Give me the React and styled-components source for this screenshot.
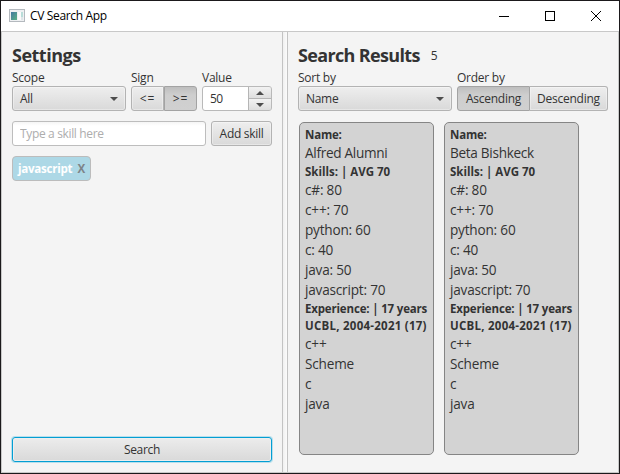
import React from "react";
import styled, { createGlobalStyle, css } from "styled-components";

const GlobalStyle = createGlobalStyle`
  * { box-sizing: border-box; }
  body { margin: 0; background: #1c1a1c; }
  button, input { font: inherit; color: inherit; letter-spacing: inherit; }
`;

const Window = styled.div`
  width: 620px;
  height: 474px;
  border: 1px solid #1b191b;
  background: #f4f4f4;
  color: #333;
  font: 12px/16px "Open Sans", "Noto Sans", sans-serif;
  letter-spacing: -0.3px;
  display: flex;
  flex-direction: column;
  white-space: nowrap;
  overflow: hidden;
`;
const TitleBar = styled.header`
  height: 30px;
  flex: none;
  background: #fff;
  color: #000;
  display: flex;
  align-items: center;
  padding-left: 8px;
`;
const WindowTitle = styled.span`
  flex: 1;
  margin-left: 5px;
  letter-spacing: -0.35px;
`;
const WindowButton = styled.span`
  width: 46px;
  height: 30px;
  display: grid;
  place-items: center;
`;
const Content = styled.main`
  flex: 1;
  border: 1px solid #c8c8c8;
  display: flex;
  min-height: 0;
`;
const Settings = styled.section`
  width: 280px;
  padding: 12px 10px 9px;
  display: flex;
  flex-direction: column;
`;
const Divider = styled.div`
  width: 6px;
  border: solid #c3c3c3;
  border-width: 0 1px;
  background: linear-gradient(to right, #f0f0f0, #fbfbfb);
`;
const Results = styled.section`
  flex: 1;
  padding: 12px 10px 17px;
  display: flex;
  flex-direction: column;
`;
const HeadingRow = styled.div`
  display: flex;
  align-items: center;
  gap: 11px;
  height: 26px;
  padding-bottom: 3px;
`;
const Heading = styled.h1`
  margin: 0;
  font-size: 18px;
  line-height: 23px;
  font-weight: 700;
  letter-spacing: ${(p) => p.$spacing || 0}px;
`;
const Fields = styled.div`
  display: flex;
  gap: 5px;
`;
const Field = styled.div`
  width: ${(p) => p.$width}px;
`;
const Label = styled.div`
  height: 16px;
  line-height: 15px;
  letter-spacing: ${(p) => p.$spacing ?? -0.25}px;
`;
const raised = css`
  border: 1px solid #b3b3b3;
  border-radius: 3px;
  background: linear-gradient(#eeeeee, #d9d9d9);
  box-shadow: inset 0 0 0 1px rgba(255, 255, 255, 0.35);
`;
const Combo = styled.div`
  ${raised}
  height: 25px;
  padding: 0 7px;
  display: flex;
  align-items: center;
  justify-content: space-between;
`;
const ToggleGroup = styled.div`
  display: flex;
  height: 25px;
`;
const Toggle = styled.button`
  ${raised}
  width: ${(p) => p.$width}px;
  padding: 0;
  letter-spacing: ${(p) => p.$spacing ?? -0.25}px;
  &:first-child { border-radius: 3px 0 0 3px; }
  &:last-child { border-radius: 0 3px 3px 0; border-left-width: ${(p) => (p.$on ? 1 : 0)}px; }
  ${(p) =>
    p.$on &&
    css`
      border-color: #a3a3a3;
      background: linear-gradient(#bebebe, #cecece 35%, #d0d0d0);
      box-shadow: none;
    `}
`;
const Spinner = styled.div`
  height: 25px;
  display: flex;
  border: 1px solid #b9b9b9;
  border-radius: 3px;
  background: #fff;
  overflow: hidden;
`;
const SpinnerValue = styled.span`
  flex: 1;
  padding: 4px 0 0 7px;
  line-height: 16px;
  letter-spacing: -0.6px;
`;
const SpinnerArrows = styled.div`
  width: 23px;
  border-left: 1px solid #b5b5b5;
  background: #b5b5b5;
  display: grid;
  grid-template-rows: 11px 11px;
  gap: 1px;
`;
const SpinnerArrow = styled.button`
  border: 0;
  padding: 0;
  display: grid;
  place-items: center;
  background: linear-gradient(#f2f2f2, #dedede);
`;
const SkillRow = styled.div`
  display: flex;
  gap: 5px;
  margin-top: 10px;
`;
const SkillInput = styled.input`
  width: 194px;
  height: 25px;
  padding: 0 7px;
  border: 1px solid #bdbdbd;
  border-radius: 3px;
  background: linear-gradient(#f5f5f5, #fff 4px);
  outline: 0;
  letter-spacing: -0.35px;
  &::placeholder { color: #adadad; opacity: 1; }
`;
const AddButton = styled.button`
  ${raised}
  width: 61px;
  height: 25px;
  padding: 0;
`;
const Tag = styled.span`
  margin-top: 10px;
  width: 79px;
  height: 25px;
  padding: 0 5px;
  border: 1px solid #bcbcbc;
  border-radius: 4px;
  background: #add8e6;
  color: #fff;
  font-weight: 700;
  font-size: 11.6px;
  display: flex;
  align-items: center;
  justify-content: space-between;
  letter-spacing: -0.28px;
`;
const TagRemove = styled.span`
  color: #7d8488;
`;
const SearchButton = styled.button`
  margin-top: auto;
  margin-bottom: 1px;
  height: 25px;
  padding: 0;
  border: 1px solid #039ed3;
  border-radius: 3px;
  background: linear-gradient(#ececec, #d9d9d9);
  box-shadow: 0 0 0 1px #b9dfec, inset 0 0 0 1px #eeeeee;
`;
const Cards = styled.div`
  flex: 1;
  display: flex;
  gap: 10px;
  margin: 11px 0 0 1px;
`;
const Card = styled.article`
  width: 135px;
  padding: 3px 5px;
  border: 1px solid #858585;
  border-radius: 5px;
  background: #d3d3d3;
`;
const CardTitle = styled.div`
  font-weight: 700;
  font-size: 11.5px;
  line-height: 17px;
  letter-spacing: ${(p) => p.$spacing ?? -0.2}px;
`;
const CardLine = styled.div`
  font-size: 13.6px;
  line-height: 20px;
  letter-spacing: ${(p) => p.$spacing ?? -0.2}px;
`;

const Arrow = ({ up, w = 8, h = 4 }) => (
  <svg width={w} height={h} viewBox="0 0 8 4">
    <path d={up ? "M0 4L4 0L8 4Z" : "M0 0H8L4 4Z"} fill="#4d4d4d" />
  </svg>
);

const AppIcon = () => (
  <svg width="16" height="14" viewBox="0 0 16 14">
    <defs>
      <linearGradient id="pane" x1="0" y1="0" x2="1" y2="1">
        <stop offset="0" stopColor="#4278a0" />
        <stop offset="1" stopColor="#5bb184" />
      </linearGradient>
    </defs>
    <rect x=".5" y=".5" width="15" height="12" fill="#eef0f2" stroke="#b4b9be" />
    <rect x="2" y="3" width="6" height="8" fill="url(#pane)" />
    <rect x="9" y="3" width="3" height="8" fill="#fafafa" />
    <rect x="12" y="3" width="2" height="5" fill="#b9ddd9" />
    <rect x="12" y="8" width="2" height="3" fill="#dfe5e8" />
  </svg>
);

const people = ["Alfred Alumni", "Beta Bishkeck"];
const skills = ["c#: 80", "c++: 70", "python: 60", "c: 40", "java: 50", "javascript: 70"];
const experience = ["c++", "Scheme", "c", "java"];

export default function App() {
  return (
    <Window>
      <GlobalStyle />
      <TitleBar>
        <AppIcon />
        <WindowTitle>CV Search App</WindowTitle>
        <WindowButton>
          <svg width="10" height="10"><path d="M0 5.5H10" stroke="#000" /></svg>
        </WindowButton>
        <WindowButton>
          <svg width="10" height="10"><rect x=".5" y=".5" width="9" height="9" fill="none" stroke="#000" /></svg>
        </WindowButton>
        <WindowButton>
          <svg width="10" height="10"><path d="M0 0L10 10M10 0L0 10" stroke="#000" /></svg>
        </WindowButton>
      </TitleBar>
      <Content>
        <Settings>
          <HeadingRow><Heading $spacing={-0.5}>Settings</Heading></HeadingRow>
          <Fields>
            <Field $width={114}>
              <Label>Scope</Label>
              <Combo>All<Arrow /></Combo>
            </Field>
            <Field $width={66}>
              <Label>Sign</Label>
              <ToggleGroup>
                <Toggle $width={33} $spacing={1}>&lt;=</Toggle>
                <Toggle $width={33} $spacing={1} $on>&gt;=</Toggle>
              </ToggleGroup>
            </Field>
            <Field $width={70}>
              <Label>Value</Label>
              <Spinner>
                <SpinnerValue>50</SpinnerValue>
                <SpinnerArrows>
                  <SpinnerArrow><Arrow up /></SpinnerArrow>
                  <SpinnerArrow><Arrow /></SpinnerArrow>
                </SpinnerArrows>
              </Spinner>
            </Field>
          </Fields>
          <SkillRow>
            <SkillInput placeholder="Type a skill here" />
            <AddButton>Add skill</AddButton>
          </SkillRow>
          <Tag>javascript<TagRemove>X</TagRemove></Tag>
          <SearchButton>Search</SearchButton>
        </Settings>
        <Divider />
        <Results>
          <HeadingRow><Heading $spacing={-0.65}>Search Results</Heading><span>5</span></HeadingRow>
          <Fields>
            <Field $width={154}>
              <Label>Sort by</Label>
              <Combo>Name<Arrow /></Combo>
            </Field>
            <Field $width={151}>
              <Label>Order by</Label>
              <ToggleGroup>
                <Toggle $width={73} $on>Ascending</Toggle>
                <Toggle $width={78}>Descending</Toggle>
              </ToggleGroup>
            </Field>
          </Fields>
          <Cards>
            {people.map((name) => (
              <Card key={name}>
                <CardTitle>Name:</CardTitle>
                <CardLine $spacing={-0.3}>{name}</CardLine>
                <CardTitle $spacing={0}>Skills: | AVG 70</CardTitle>
                {skills.map((s) => <CardLine key={s}>{s}</CardLine>)}
                <CardTitle $spacing={-0.17}>Experience: | 17 years</CardTitle>
                <CardTitle $spacing={0.25}>UCBL, 2004-2021 (17)</CardTitle>
                {experience.map((s) => <CardLine key={s}>{s}</CardLine>)}
              </Card>
            ))}
          </Cards>
        </Results>
      </Content>
    </Window>
  );
}
